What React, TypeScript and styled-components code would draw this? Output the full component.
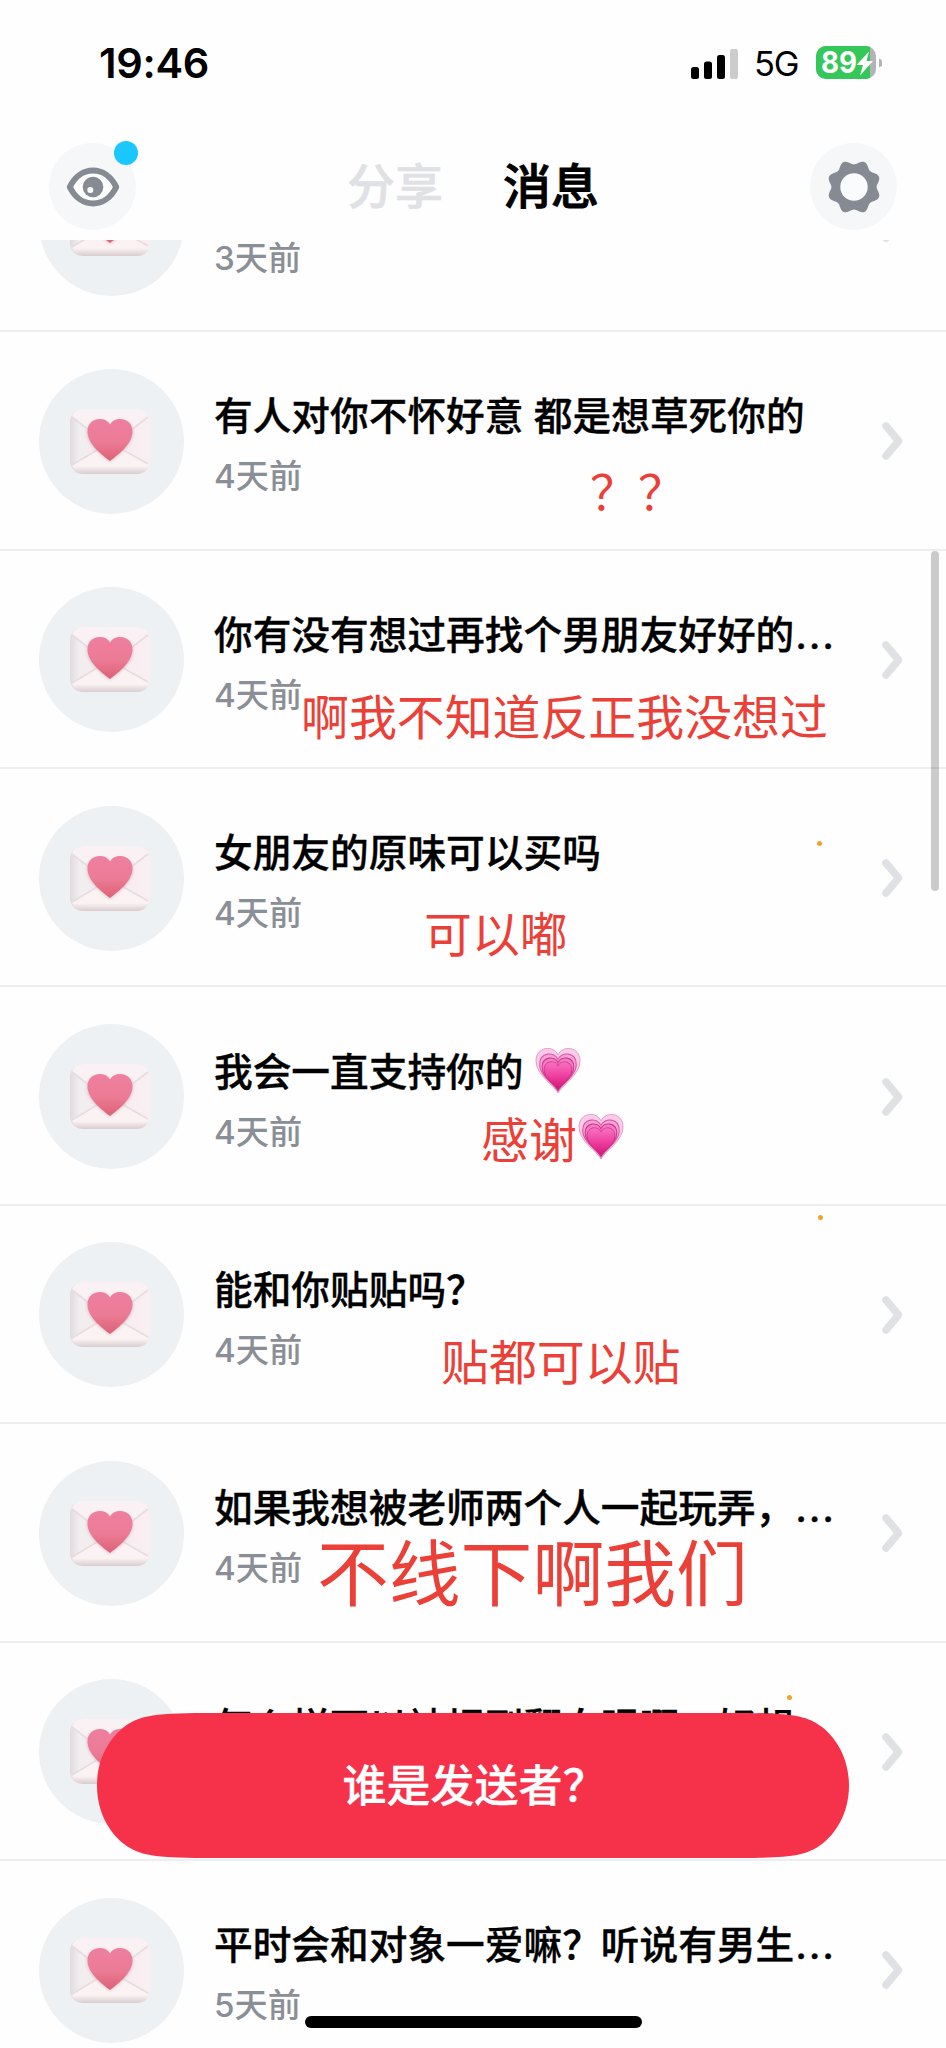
import React from 'react';
import styled, { createGlobalStyle } from 'styled-components';

const Global = createGlobalStyle`
  * { box-sizing: border-box; }
  html, body { margin: 0; padding: 0; background: #fefefe; overflow: hidden; }
`;

const FONT = `Inter, "Noto Sans CJK SC", sans-serif`;

const Screen = styled.div`
  position: relative;
  width: 946px;
  height: 2048px;
  overflow: hidden;
  background: #fefefe;
  color: #000;
  font-family: ${FONT};
  display: flex;
  flex-direction: column;
`;

const StatusBar = styled.div`
  height: 126px;
  padding: 0 64px 0 99px;
  display: flex;
  align-items: center;
  justify-content: space-between;
`;

const Clock = styled.div`
  font-size: 41.5px;
  font-weight: 600;
  line-height: 50px;
  letter-spacing: -0.3px;
`;

const StatusIcons = styled.div`
  display: flex;
  align-items: center;
  height: 36px;
`;

const Network = styled.span`
  font-size: 34.5px;
  line-height: 36px;
  letter-spacing: -1.2px;
  margin: 2px 17px 0 15px;
  width: 45px;
`;

const Header = styled.header`
  height: 114px;
  padding: 17px 49px 0;
  display: flex;
  justify-content: space-between;
`;

const RoundButton = styled.button`
  position: relative;
  width: 87px;
  height: 87px;
  padding: 0;
  border: 0;
  border-radius: 50%;
  background: #f5f7f9;
  display: flex;
  align-items: center;
  justify-content: center;
`;

const Badge = styled.span`
  position: absolute;
  top: -2px;
  left: 65px;
  width: 24px;
  height: 24px;
  border-radius: 50%;
  background: #1ac7ff;
`;

const Tabs = styled.nav`
  display: flex;
  gap: 60px;
  height: 87px;
  align-items: center;
`;

const Tab = styled.span<{ $active?: boolean }>`
  font-size: 48px;
  line-height: 60px;
  padding-top: 1px;
  font-weight: 500;
  color: ${p => (p.$active ? '#000' : '#dfe1e4')};
  -webkit-text-stroke: ${p => (p.$active ? 0.9 : 0.5)}px currentColor;
`;

const List = styled.main`
  height: 1808px;
  overflow: hidden;
`;

const Rows = styled.div`
  margin-top: -126.2px;
`;

const Row = styled.div`
  height: 218.4px;
  padding: 2px 41px 0 39px;
  border-bottom: 2px solid #eeeeef;
  display: flex;
  align-items: center;
`;

const Avatar = styled.div`
  width: 145px;
  height: 145px;
  flex: none;
  padding: 0 3px 1px 0;
  border-radius: 50%;
  background: #edf1f4;
  display: flex;
  align-items: center;
  justify-content: center;
`;

const Texts = styled.div`
  flex: 1;
  margin-left: 30px;
  padding-top: 6px;
  display: flex;
  flex-direction: column;
  gap: 8px;
`;

const Title = styled.div`
  display: flex;
  align-items: center;
  height: 56px;
  font-size: 38.7px;
  line-height: 56px;
  font-weight: 500;
  white-space: pre;
  -webkit-text-stroke: 0.35px currentColor;
`;

const Ellipsis = styled.span`
  letter-spacing: 1.7px;
  padding-left: 1px;
`;

const Time = styled.div`
  height: 48px;
  font-size: 33.2px;
  line-height: 48px;
  font-weight: 500;
  color: #8a8e96;
`;

const Note = styled.div<{ $x: number; $y: number; $size?: number }>`
  position: absolute;
  left: ${p => p.$x}px;
  top: ${p => p.$y}px;
  font-size: ${p => p.$size ?? 47.9}px;
  line-height: 1;
  font-family: "Noto Sans CJK SC", sans-serif;
  color: #eb4037;
  white-space: pre;
  display: flex;
  align-items: center;
`;

const Speck = styled.span<{ $x: number; $y: number }>`
  position: absolute;
  left: ${p => p.$x}px;
  top: ${p => p.$y}px;
  width: 5px;
  height: 5px;
  border-radius: 50%;
  background: #f0a22e;
`;

const ScrollThumb = styled.div`
  position: absolute;
  left: 931px;
  top: 551px;
  width: 8px;
  height: 340px;
  border-radius: 4px;
  background: rgba(0, 0, 0, 0.2);
`;

const SenderButton = styled.button`
  position: absolute;
  left: 97px;
  top: 1713px;
  width: 752px;
  height: 145px;
  padding: 0 0 5px 3px;
  border: 0;
  background: #f5324a;
  color: #fff;
  font-family: ${FONT};
  font-size: 44px;
  font-weight: 500;
  -webkit-text-stroke: 0.3px currentColor;
  clip-path: path('M0 72.5C0 44 14 24 27 14C45 0 66 0 130 0L622 0C686 0 707 0 725 14C738 24 752 44 752 72.5C752 101 738 121 725 131C707 145 686 145 622 145L130 145C66 145 45 145 27 131C14 121 0 101 0 72.5Z');
`;

const HomeBar = styled.div`
  position: absolute;
  left: 305px;
  top: 2016px;
  width: 337px;
  height: 12px;
  border-radius: 6px;
  background: #000;
`;

const SignalIcon = () => (
  <svg width="48" height="31" viewBox="0 0 48 31">
    <rect x="0" y="19" width="8" height="12" rx="2.5" />
    <rect x="13" y="13.5" width="8" height="17.5" rx="2.5" />
    <rect x="26" y="7" width="8" height="24" rx="2.5" />
    <rect x="39" y="1" width="8" height="30" rx="2.5" fill="#ccc" />
  </svg>
);

const BatteryIcon = () => (
  <svg width="66" height="34" viewBox="0 0 66 34">
    <defs>
      <clipPath id="cell"><rect width="60" height="33" rx="10" /></clipPath>
    </defs>
    <g clipPath="url(#cell)">
      <rect width="60" height="33" fill="#b4b4b6" />
      <rect width="54" height="33" fill="#34c759" />
    </g>
    <path d="M63 12.5q3.5 1 3.500 4.500t-3.500 4.500z" fill="#b4b4b6" />
    <text x="5" y="27" fontFamily="Inter" fontWeight="700" fontSize="30" textLength="36" lengthAdjust="spacingAndGlyphs" fill="#fff">89</text>
    <path d="M53 5.500L40.500 19h6.500L44 29.500 57 15h-6.500z" fill="#fff" />
  </svg>
);

const EyeIcon = () => (
  <svg width="54" height="40" viewBox="0 0 54 40">
    <path d="M3.800 20C9 9 18 3.500 27 3.500S45 9 50.200 20C45 31 36 36.500 27 36.500S9 31 3.800 20Z" fill="#fcfdfd" stroke="#868b93" strokeWidth="6" strokeLinejoin="round" />
    <circle cx="27" cy="20" r="10.300" fill="#868b93" />
    <circle cx="24.300" cy="23" r="3" fill="#fcfdfd" />
  </svg>
);

const gearPath = (() => {
  const pts: string[] = [];
  for (let i = 0; i <= 160; i++) {
    const a = (i / 160) * Math.PI * 2;
    const r = 24.8 - 2.2 * Math.cos(8 * a);
    pts.push(`${(27 + r * Math.cos(a)).toFixed(2)} ${(27 + r * Math.sin(a)).toFixed(2)}`);
  }
  return `M${pts.join('L')}Z`;
})();

const GearIcon = () => (
  <svg width="54" height="54" viewBox="0 0 54 54">
    <path d={gearPath} fill="#868b93" />
    <circle cx="27" cy="27" r="13.700" fill="#f9fbfc" />
  </svg>
);

const Chevron = () => (
  <svg width="24" height="40" viewBox="0 0 24 40">
    <path d="M5 5L17.500 20L5 35" fill="none" stroke="#dfe1e4" strokeWidth="7.500" strokeLinecap="round" strokeLinejoin="round" />
  </svg>
);

const LetterIcon = () => (
  <svg width="84" height="70" viewBox="0 0 84 70">
    <defs>
      <linearGradient id="paper" x1="0" y1="0" x2="1" y2="0">
        <stop offset="0" stopColor="#dfdadb" />
        <stop offset="0.120" stopColor="#f2edef" />
        <stop offset="1" stopColor="#faeef2" />
      </linearGradient>
      <linearGradient id="edge" x1="0" y1="0" x2="0" y2="1">
        <stop offset="0.880" stopColor="#d9cccf" stopOpacity="0" />
        <stop offset="1" stopColor="#d8cccf" />
      </linearGradient>
      <linearGradient id="love" x1="0" y1="0" x2="0" y2="1">
        <stop offset="0" stopColor="#ee7f9f" />
        <stop offset="0.550" stopColor="#ec7b95" />
        <stop offset="1" stopColor="#dc6274" />
      </linearGradient>
      <filter id="soft" x="-30%" y="-30%" width="160%" height="160%">
        <feGaussianBlur stdDeviation="1.600" />
      </filter>
      <clipPath id="sheet"><rect x="2" y="3" width="80" height="65" rx="13" /></clipPath>
    </defs>
    <rect x="2" y="3" width="80" height="65" rx="13" fill="url(#paper)" />
    <g clipPath="url(#sheet)">
      <path d="M4 10L36 35Q42 39 48 35L80 10Q77 3 68 3H16Q7 3 4 10Z" fill="#f9f1f4" />
      <path d="M4 60L36 40Q42 36 48 40L80 58Q78 68 68 68H15Q7 68 4 60Z" fill="#faf2f3" />
      <path d="M4 11L34 34M80 11L50 34M4 59L34 41M80 58L50 41" stroke="#e6dde0" strokeWidth="1.600" fill="none" />
    </g>
    <rect x="2" y="3" width="80" height="65" rx="13" fill="url(#edge)" />
    <path d="M42 56C34 50 19 39 19 27C19 13 37 11 42 20C47 11 65 13 65 27C65 39 50 50 42 56Z" fill="#cda9b3" opacity="0.600" filter="url(#soft)" />
    <path d="M42 55C34 49 19.500 38 19.500 25.500C19.500 11.500 37 9.500 42 18.500C47 9.500 64.500 11.500 64.500 25.500C64.500 38 50 49 42 55Z" fill="url(#love)" />
  </svg>
);

const HEART = 'M23 45C19 37 1 27 1 13C1 -2 19 -3 23 7C27 -3 45 -2 45 13C45 27 27 37 23 45Z';

const HeartSvg = styled.svg`
  margin: 0 0 2px 1px;
`;

const GrowingHeart = () => (
  <HeartSvg width="46" height="46" viewBox="0 0 46 46">
    <defs>
      <linearGradient id="core" x1="0" y1="0" x2="0" y2="1">
        <stop offset="0" stopColor="#f874c4" />
        <stop offset="0.500" stopColor="#ee3fa0" />
        <stop offset="1" stopColor="#cf1474" />
      </linearGradient>
    </defs>
    <path d={HEART} fill="#fbcbe9" stroke="#e79bcb" strokeWidth="1" />
    <path d={HEART} transform="translate(3.900 5.600) scale(.83)" fill="#f9a3d8" stroke="#d7589f" strokeWidth="1.300" />
    <path d={HEART} transform="translate(6.400 9.700) scale(.72)" fill="#f77cc6" stroke="#c93a8a" strokeWidth="1.500" />
    <path d={HEART} transform="translate(8.500 13.500) scale(.63)" fill="url(#core)" stroke="#c92b80" strokeWidth="1.200" />
  </HeartSvg>
);

const messages: { text: string; time: string; heart?: boolean; more?: boolean }[] = [
  { text: '', time: '3天前' },
  { text: '有人对你不怀好意 都是想草死你的', time: '4天前' },
  { text: '你有没有想过再找个男朋友好好的', time: '4天前', more: true },
  { text: '女朋友的原味可以买吗', time: '4天前' },
  { text: '我会一直支持你的 ', time: '4天前', heart: true },
  { text: '能和你贴贴吗？', time: '4天前' },
  { text: '如果我想被老师两个人一起玩弄，', time: '4天前', more: true },
  { text: '怎么样可以被捏到翻白眼啊，好想', time: '4天前', more: true },
  { text: '平时会和对象一爱嘛？听说有男生', time: '5天前', more: true },
];

export default function App() {
  return (
    <Screen>
      <Global />
      <StatusBar>
        <Clock>19:46</Clock>
        <StatusIcons>
          <SignalIcon />
          <Network>5G</Network>
          <BatteryIcon />
        </StatusIcons>
      </StatusBar>
      <Header>
        <RoundButton><EyeIcon /><Badge /></RoundButton>
        <Tabs>
          <Tab>分享</Tab>
          <Tab $active>消息</Tab>
        </Tabs>
        <RoundButton><GearIcon /></RoundButton>
      </Header>
      <List>
        <Rows>
          {messages.map((m, i) => (
            <Row key={i}>
              <Avatar><LetterIcon /></Avatar>
              <Texts>
                <Title>
                  {m.text}
                  {m.heart && <GrowingHeart />}
                  {m.more && <Ellipsis>...</Ellipsis>}
                </Title>
                <Time>{m.time}</Time>
              </Texts>
              <Chevron />
            </Row>
          ))}
        </Rows>
      </List>
      <Note $x={590} $y={466}>？？</Note>
      <Note $x={301} $y={691}>啊我不知道反正我没想过</Note>
      <Note $x={424} $y={908}>可以嘟</Note>
      <Note $x={481} $y={1114}>感谢<GrowingHeart /></Note>
      <Note $x={441} $y={1336}>贴都可以贴</Note>
      <Note $x={317} $y={1534} $size={71.8}>不线下啊我们</Note>
      <Speck $x={817} $y={841} />
      <Speck $x={818} $y={1215} />
      <Speck $x={787} $y={1695} />
      <ScrollThumb />
      <SenderButton>谁是发送者？</SenderButton>
      <HomeBar />
    </Screen>
  );
}
